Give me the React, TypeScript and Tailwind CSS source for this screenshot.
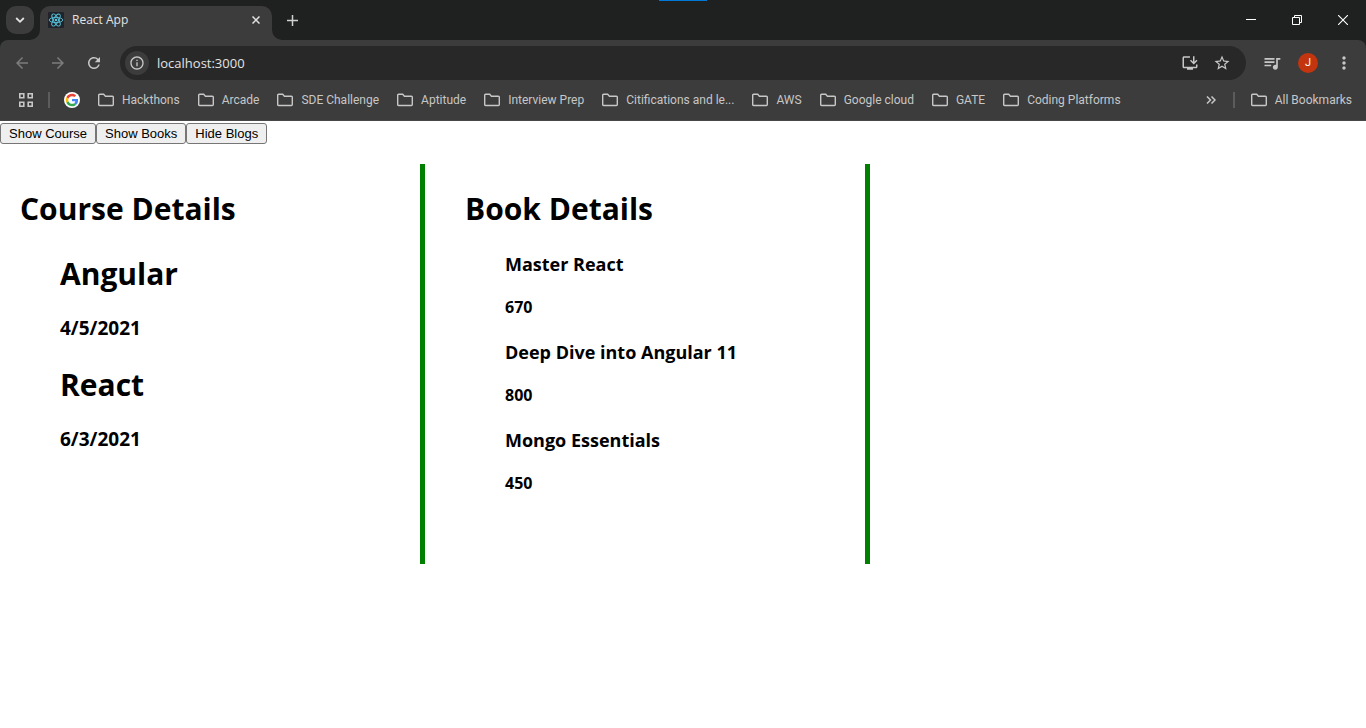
import { useState } from "react";
import type { ReactNode } from "react";
import {
  MdArrowBack,
  MdArrowForward,
  MdInstallDesktop,
  MdMoreVert,
  MdOutlineInfo,
  MdQueueMusic,
  MdRefresh,
  MdStarBorder,
} from "react-icons/md";

const bookmarks = [
  "Hackthons",
  "Arcade",
  "SDE Challenge",
  "Aptitude",
  "Interview Prep",
  "Citifications and le...",
  "AWS",
  "Google cloud",
  "GATE",
  "Coding Platforms",
];

const courses = [
  { id: 1, name: "Angular", date: "4/5/2021" },
  { id: 2, name: "React", date: "6/3/2021" },
];

const books = [
  { id: 1, name: "Master React", price: 670 },
  { id: 2, name: "Deep Dive into Angular 11", price: 800 },
  { id: 3, name: "Mongo Essentials", price: 450 },
];

function ReactLogo() {
  return (
    <svg viewBox="0 0 16 16" className="size-4 shrink-0" aria-hidden="true">
      <rect width="16" height="16" rx="1" fill="#20232a" />
      <g fill="none" stroke="#58c4dc" strokeWidth="0.9">
        <ellipse cx="8" cy="8" rx="6.8" ry="2.6" />
        <ellipse cx="8" cy="8" rx="6.8" ry="2.6" transform="rotate(60 8 8)" />
        <ellipse cx="8" cy="8" rx="6.8" ry="2.6" transform="rotate(120 8 8)" />
      </g>
      <circle cx="8" cy="8" r="1.3" fill="#58c4dc" />
    </svg>
  );
}

function GoogleLogo() {
  return (
    <svg viewBox="0 0 48 48" className="size-4" aria-hidden="true">
      <circle cx="24" cy="24" r="24" fill="#fff" />
      <g transform="translate(5 5) scale(0.79)">
        <path fill="#EA4335" d="M24 9.5c3.54 0 6.71 1.22 9.21 3.6l6.85-6.85C35.9 2.38 30.47 0 24 0 14.62 0 6.51 5.38 2.56 13.22l7.98 6.19C12.43 13.72 17.74 9.5 24 9.5z" />
        <path fill="#4285F4" d="M46.98 24.55c0-1.57-.15-3.09-.38-4.55H24v9.02h12.94c-.58 2.96-2.26 5.48-4.78 7.18l7.73 6c4.51-4.18 7.09-10.36 7.09-17.65z" />
        <path fill="#FBBC05" d="M10.53 28.59c-.48-1.45-.76-2.99-.76-4.59s.27-3.14.76-4.59l-7.98-6.19C.92 16.46 0 20.12 0 24c0 3.88.92 7.54 2.56 10.78l7.97-6.19z" />
        <path fill="#34A853" d="M24 48c6.48 0 11.93-2.13 15.89-5.81l-7.73-6c-2.15 1.45-4.92 2.3-8.16 2.3-6.26 0-11.57-4.22-13.47-9.91l-7.98 6.19C6.51 42.62 14.62 48 24 48z" />
      </g>
    </svg>
  );
}

function FolderIcon() {
  return (
    <svg viewBox="0 0 16 14" className="h-3.5 w-4 shrink-0" fill="none" stroke="#c7c7c7" strokeWidth="1.4" aria-hidden="true">
      <path d="M.7 11.6V2.2c0-.6.3-.9.9-.9h4.1l1.7 1.9h7c.6 0 .9.3.9.9v7.5c0 .6-.3.9-.9.9H1.6c-.6 0-.9-.3-.9-.9z" />
    </svg>
  );
}

function AppsIcon() {
  return (
    <svg viewBox="0 0 14 14" className="size-3.5" fill="none" stroke="#c7c7c7" strokeWidth="1.6" aria-hidden="true">
      <path d="M.8.8h4v4h-4zM9.2.8h4v4h-4zM.8 9.2h4v4h-4zM9.2 9.2h4v4h-4z" />
    </svg>
  );
}

function IconButton({ label, className, children }: { label: string; className?: string; children: ReactNode }) {
  return (
    <button type="button" aria-label={label} className={`flex items-center justify-center ${className ?? ""}`}>
      {children}
    </button>
  );
}

function TabStrip() {
  return (
    <div className="relative flex h-10 items-end bg-[#1f2120]">
      <div className="absolute top-0 left-1/2 h-px w-12 -translate-x-1/2 bg-[#0078d7]" />
      <div className="flex h-full items-center px-1.5">
        <IconButton label="Search tabs" className="size-7 rounded-[10px] bg-[#3c3c3c]">
          <svg viewBox="0 0 10 10" className="size-2.5" fill="none" stroke="#e3e3e3" strokeWidth="1.8" aria-hidden="true">
            <path d="M1.2 3l3.8 3.8L8.8 3" />
          </svg>
        </IconButton>
      </div>
      <div className="relative flex h-[34px] w-[232px] items-center rounded-t-[10px] bg-[#3c3c3c] pr-2 pb-1.5 pl-2">
        <svg viewBox="0 0 10 10" className="absolute right-full bottom-0 size-2.5" fill="#3c3c3c" aria-hidden="true">
          <path d="M10 0v10H0A10 10 0 0 0 10 0z" />
        </svg>
        <svg viewBox="0 0 10 10" className="absolute bottom-0 left-full size-2.5" fill="#3c3c3c" aria-hidden="true">
          <path d="M0 0v10h10A10 10 0 0 1 0 0z" />
        </svg>
        <ReactLogo />
        <span className="ml-2 flex-1 text-xs text-[#e3e3e3]">React App</span>
        <IconButton label="Close tab" className="size-4">
          <svg viewBox="0 0 8 8" className="size-2" fill="none" stroke="#e3e3e3" strokeWidth="1.5" aria-hidden="true">
            <path d="M.5.5l7 7M7.5.5l-7 7" />
          </svg>
        </IconButton>
      </div>
      <IconButton label="New tab" className="ml-1.5 h-full w-7">
        <svg viewBox="0 0 11 11" className="size-[11px]" fill="none" stroke="#d0d0d0" strokeWidth="1.5" aria-hidden="true">
          <path d="M5.5 0v11M0 5.5h11" />
        </svg>
      </IconButton>
      <div className="ml-auto flex h-full text-white">
        <IconButton label="Minimize" className="w-[46px]">
          <svg viewBox="0 0 10 10" className="size-2.5" stroke="currentColor" aria-hidden="true">
            <path d="M0 4.5h10" />
          </svg>
        </IconButton>
        <IconButton label="Restore" className="w-[46px]">
          <svg viewBox="0 0 10 10" className="size-2.5" fill="none" stroke="currentColor" aria-hidden="true">
            <path d="M.5 2.5h7v7h-7zM2.5 2.5v-2h7v7h-2" />
          </svg>
        </IconButton>
        <IconButton label="Close" className="w-[46px]">
          <svg viewBox="0 0 10 10" className="size-2.5" stroke="currentColor" strokeWidth="1.1" aria-hidden="true">
            <path d="M0 0l10 10M10 0L0 10" />
          </svg>
        </IconButton>
      </div>
    </div>
  );
}

function Toolbar() {
  return (
    <div className="flex h-[46px] items-center bg-[#3c3c3c] text-[#c7c7c7]">
      <div className="flex items-center gap-2 pr-3 pl-2">
        <IconButton label="Back" className="size-7 text-[#7c7c7c]"><MdArrowBack size={18} /></IconButton>
        <IconButton label="Forward" className="size-7 text-[#7c7c7c]"><MdArrowForward size={18} /></IconButton>
        <IconButton label="Reload" className="size-7"><MdRefresh size={18} /></IconButton>
      </div>
      <div className="flex h-[34px] flex-1 items-center rounded-full bg-[#282828] pr-[15px] pl-[5px]">
        <IconButton label="Site information" className="size-6 rounded-full bg-[#3c3c3c]"><MdOutlineInfo size={16} /></IconButton>
        <input
          type="text"
          aria-label="Address"
          defaultValue="localhost:3000"
          className="ml-2 h-6 min-w-0 flex-1 bg-transparent text-[13px] text-[#e3e3e3] outline-none"
        />
        <div className="flex gap-3.5">
          <IconButton label="Install app"><MdInstallDesktop size={18} /></IconButton>
          <IconButton label="Bookmark this page"><MdStarBorder size={18} /></IconButton>
        </div>
      </div>
      <div className="flex items-center gap-4 pr-3 pl-4">
        <IconButton label="Media controls" className="size-5"><MdQueueMusic size={20} /></IconButton>
        <IconButton label="Profile J" className="size-5 rounded-full bg-[#c2350e] font-[Roboto,sans-serif] text-[11px] text-white">J</IconButton>
        <IconButton label="Menu" className="size-5"><MdMoreVert size={20} /></IconButton>
      </div>
    </div>
  );
}

function BookmarksBar() {
  return (
    <nav aria-label="Bookmarks" className="flex h-[35px] items-center border-b border-[#474747] bg-[#3c3c3c] pr-3.5 pb-1.5 pl-[19px] font-[Roboto,sans-serif] text-xs whitespace-nowrap text-[#c7c7c7]">
      <IconButton label="Apps" className="size-3.5"><AppsIcon /></IconButton>
      <div className="mr-3.5 ml-[15px] h-4 w-0.5 bg-[#5c5c5c]" />
      <a href="#google" aria-label="Google"><GoogleLogo /></a>
      <div className="ml-[18px] flex gap-[18px]">
        {bookmarks.map((title) => (
          <button key={title} type="button" className="flex items-center gap-2">
            <FolderIcon />
            {title}
          </button>
        ))}
      </div>
      <IconButton label="More bookmarks" className="ml-auto">
        <svg viewBox="0 0 10 8" className="h-2 w-2.5" fill="none" stroke="#c7c7c7" strokeWidth="1.5" aria-hidden="true">
          <path d="M1 .5L4.5 4 1 7.5M5.5.5L9 4 5.5 7.5" />
        </svg>
      </IconButton>
      <div className="mr-4 ml-[17px] h-4 w-0.5 bg-[#5c5c5c]" />
      <button type="button" className="flex items-center gap-2">
        <FolderIcon />
        All Bookmarks
      </button>
    </nav>
  );
}

const toggleClass =
  "h-[21px] rounded-[3px] border border-[#767676] bg-[#efefef] px-2 font-['Liberation_Sans',Arial,sans-serif] text-[13px] leading-[19px] text-black";

export default function App() {
  const [showCourse, setShowCourse] = useState(true);
  const [showBooks, setShowBooks] = useState(true);
  const [hideBlogs, setHideBlogs] = useState(true);

  return (
    <div className="min-h-screen bg-white font-['Open_Sans','Segoe_UI',sans-serif] text-black">
      <header className="bg-[#1f2120]">
        <TabStrip />
        <div className="overflow-hidden rounded-t-lg">
          <Toolbar />
          <BookmarksBar />
        </div>
      </header>
      <main>
        <div className="flex pt-0.5">
          <button type="button" className={toggleClass} onClick={() => setShowCourse(!showCourse)}>Show Course</button>
          <button type="button" className={toggleClass} onClick={() => setShowBooks(!showBooks)}>Show Books</button>
          <button type="button" className={toggleClass} onClick={() => setHideBlogs(!hideBlogs)}>Hide Blogs</button>
        </div>
        <div className="mt-5 flex font-bold">
          <section className="min-h-[400px] w-[420px] pt-[23px] pl-5">
            {showCourse && (
              <>
                <h1 className="text-[30px] leading-[43px]">Course Details</h1>
                <ul className="pl-10">
                  {courses.map((course) => (
                    <li key={course.id}>
                      <h2 className="mt-[22px] text-[30px] leading-[43px]">{course.name}</h2>
                      <h3 className="mt-5 text-[19px] leading-[26px]">{course.date}</h3>
                    </li>
                  ))}
                </ul>
              </>
            )}
          </section>
          <section className="min-h-[400px] w-[445px] border-l-[5px] border-[#008000] pt-[23px] pl-10">
            {showBooks && (
              <>
                <h1 className="text-[30px] leading-[43px]">Book Details</h1>
                <ul className="pl-10">
                  {books.map((book) => (
                    <li key={book.id}>
                      <h3 className="mt-[22px] text-[18px] leading-[25px]">{book.name}</h3>
                      <h4 className="mt-5 text-base leading-[21px]">{book.price}</h4>
                    </li>
                  ))}
                </ul>
              </>
            )}
          </section>
          <section className="min-h-[400px] flex-1 border-l-[5px] border-[#008000]" />
        </div>
      </main>
    </div>
  );
}
